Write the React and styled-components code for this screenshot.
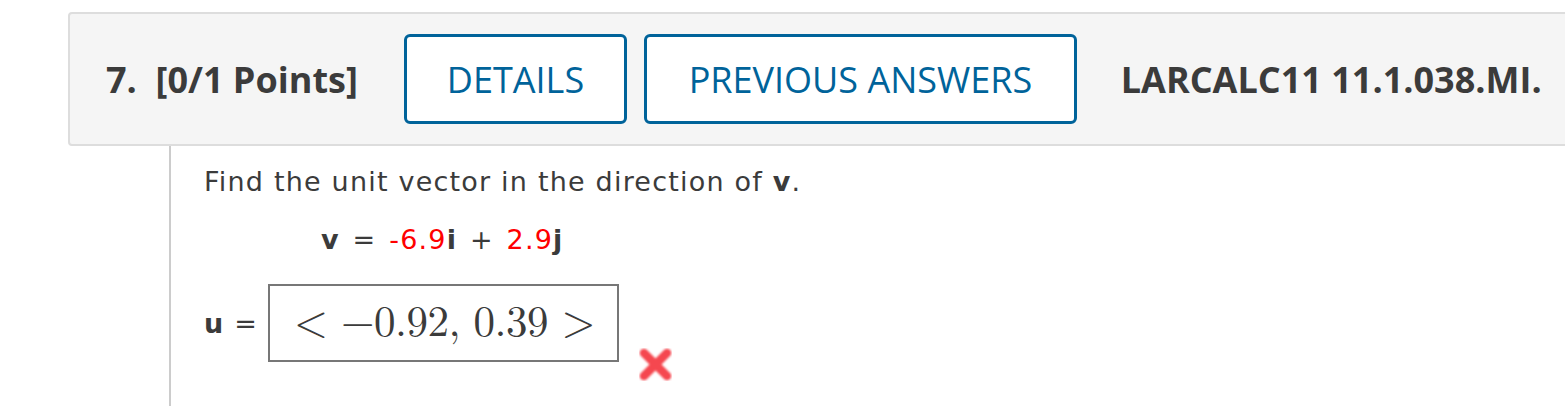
import React from "react";
import styled, { createGlobalStyle } from "styled-components";

const Global = createGlobalStyle`
  html, body { margin: 0; padding: 0; background: #fff; }
  body { overflow: hidden; }
`;

const Page = styled.div`
  width: 1565px;
  height: 406px;
  overflow: hidden;
  padding-top: 12px;
  box-sizing: border-box;
`;

const Header = styled.div`
  margin-left: 68px;
  width: 1520px;
  height: 134px;
  box-sizing: border-box;
  border: 2px solid #dddddd;
  border-radius: 4px;
  background: #f5f5f5;
  display: flex;
  align-items: center;
  padding-left: 36px;
  font-family: "Open Sans", sans-serif;
  color: #3b3b3b;
`;

const Title = styled.div`
  font-size: 36px;
  font-weight: 700;
  white-space: pre;
  margin-right: 46px;
`;

const OutlineButton = styled.button`
  height: 90px;
  box-sizing: border-box;
  border: 3px solid #00639a;
  border-radius: 6px;
  background: #fff;
  color: #00639a;
  font-family: "Open Sans", sans-serif;
  font-size: 36px;
  font-weight: 400;
  padding: 0 ${(p) => p.$pad}px;
  margin-right: ${(p) => p.$gap}px;
  white-space: nowrap;
  cursor: pointer;
`;

const Code = styled.div`
  font-size: 36px;
  font-weight: 700;
  white-space: nowrap;
`;

const Body = styled.div`
  margin-left: 169px;
  border-left: 2px solid #cccccc;
  height: 260px;
  padding-left: 33px;
  font-family: "DejaVu Sans", Verdana, sans-serif;
  color: #3b3b3b;
  font-size: 27px;
  letter-spacing: 1.2px;
  box-sizing: border-box;
  padding-top: 20px;
`;

const Line = styled.div`
  height: ${(p) => p.$h}px;
  display: flex;
  align-items: flex-start;
  padding-left: ${(p) => p.$indent || 0}px;
  word-spacing: ${(p) => p.$ws || 0}px;
  white-space: pre;
`;

const Red = styled.span`
  color: #ff0000;
`;

const Bold = styled.b`
  font-weight: 700;
`;

const AnswerBox = styled.div`
  width: 351px;
  height: 78px;
  box-sizing: border-box;
  border: 2px solid #777777;
  margin-left: 10px;
  display: flex;
  align-items: center;
  justify-content: center;
  font-family: "Latin Modern Math", "DejaVu Serif", "Liberation Serif", serif;
  font-size: 43px;
  letter-spacing: -0.5px;
  color: #3b3b3b;
  padding-left: 2px;
`;

const Mark = styled.svg`
  margin-left: 18px;
  align-self: flex-end;
  margin-bottom: -21px;
`;

const AnswerRow = styled.div`
  display: flex;
  align-items: center;
`;

function WrongMark() {
  return (
    <Mark width="37" height="37" viewBox="0 0 37 37">
      <defs>
        <filter id="soft" x="-20%" y="-20%" width="140%" height="140%">
          <feGaussianBlur stdDeviation="0.8" />
        </filter>
      </defs>
      <g filter="url(#soft)" stroke="#f5474f" strokeWidth="8.5" strokeLinecap="round">
        <line x1="7" y1="7" x2="30" y2="30" />
        <line x1="30" y1="7" x2="7" y2="30" />
      </g>
    </Mark>
  );
}

export default function App() {
  return (
    <>
      <Global />
      <Page>
        <Header>
          <Title>{"7.  [0/1 Points]"}</Title>
          <OutlineButton $pad={40} $gap={17}>DETAILS</OutlineButton>
          <OutlineButton $pad={41.5} $gap={44}>PREVIOUS ANSWERS</OutlineButton>
          <Code>LARCALC11 11.1.038.MI.</Code>
        </Header>
        <Body>
          <Line $h={58}>
            Find the unit vector in the direction of <Bold>v</Bold>.
          </Line>
          <Line $h={60} $indent={117} $ws={3}>
            <Bold>v</Bold> = <Red>-6.9</Red><Bold>i</Bold> + <Red>2.9</Red><Bold>j</Bold>
          </Line>
          <AnswerRow>
            <span>
              <Bold>u</Bold> =
            </span>
            <AnswerBox>&lt; −0.92, 0.39 &gt;</AnswerBox>
            <WrongMark />
          </AnswerRow>
        </Body>
      </Page>
    </>
  );
}
